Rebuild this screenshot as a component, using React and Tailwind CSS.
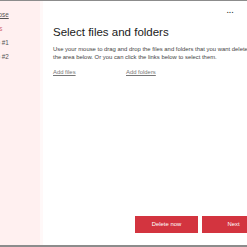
export default function App() {
  const font = { fontFamily: '"Liberation Sans", Arial, sans-serif' }
  return (
    <div className="w-[247px] h-[247px] overflow-hidden bg-white flex flex-col" style={font}>
      <div className="h-px bg-[#8c8c8c] shrink-0" />
      <div className="flex flex-1 min-h-0">
        {/* sidebar */}
        <aside className="w-[40px] shrink-0 bg-[#fff0f0] overflow-hidden">
          <div className="ml-[-13px] pt-[10px] flex flex-col gap-[6.3px] text-[6.3px] leading-[7.7px] whitespace-nowrap text-[#555]">
            <span className="underline">Choose</span>
            <span className="text-[#d46a70]">Items</span>
            <span>Step #1</span>
            <span>Step #2</span>
          </div>
        </aside>
        <div className="w-[3px] shrink-0 bg-[#fff8f8]" />
        {/* main */}
        <main className="flex-1 min-w-0 flex flex-col pl-[10px] overflow-hidden">
          <div className="flex justify-end pr-[13px] pt-[6px] h-[14px] text-[7px] leading-[8px] text-[#333] font-bold tracking-[0.5px]">
            ...
          </div>
          <h1 className="mt-[11px] text-[11.5px] leading-[13px] text-[#1a1a1a] whitespace-nowrap">
            Select files and folders
          </h1>
          <p className="mt-[7px] text-[5.9px] leading-[7.5px] text-[#444] whitespace-nowrap">
            Use your mouse to drag and drop the files and folders that you want deleted to
            <br />
            the area below. Or you can click the links below to select them.
          </p>
          <div className="mt-[8px] flex text-[5.9px] leading-[7px] text-[#777] underline whitespace-nowrap">
            <span className="w-[73px]">Add files</span>
            <span>Add folders</span>
          </div>
          <div className="flex-1" />
          <div className="flex gap-[4px] pl-[82px] pb-[12px] whitespace-nowrap">
            <button className="w-[63px] h-[17px] shrink-0 bg-[#d3343f] text-white text-[5.9px] flex items-center justify-center">
              Delete now
            </button>
            <button className="w-[63px] h-[17px] shrink-0 bg-[#d3343f] text-white text-[5.9px] flex items-center justify-center">
              Next
            </button>
          </div>
        </main>
      </div>
      <div className="h-[2px] bg-[#8c8c8c] shrink-0" />
    </div>
  )
}
